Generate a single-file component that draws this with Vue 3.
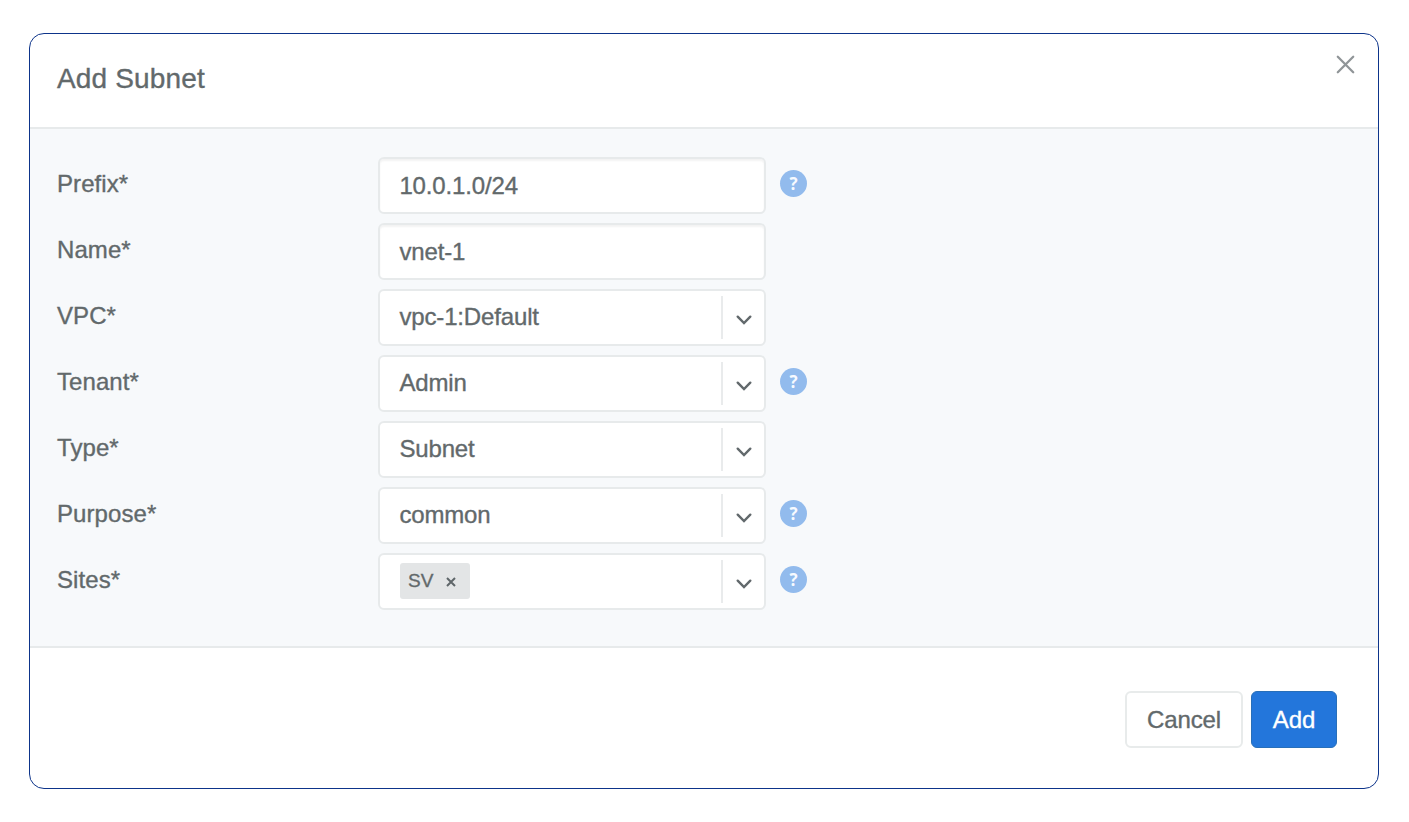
<script setup>
const rows = [
  { label: 'Prefix*', value: '10.0.1.0/24', kind: 'input', help: true },
  { label: 'Name*', value: 'vnet-1', kind: 'input' },
  { label: 'VPC*', value: 'vpc-1:Default', kind: 'select' },
  { label: 'Tenant*', value: 'Admin', kind: 'select', help: true },
  { label: 'Type*', value: 'Subnet', kind: 'select' },
  { label: 'Purpose*', value: 'common', kind: 'select', help: true },
  { label: 'Sites*', value: 'SV', kind: 'tags', help: true },
]
</script>

<template>
  <div class="page">
    <div class="modal">
      <header class="head">
        <h1 class="title">Add Subnet</h1>
        <svg class="close" width="20" height="20" viewBox="0 0 20 20">
          <path d="M1.8 1.8 17.2 17.2M17.2 1.8 1.8 17.2" fill="none" stroke="#909598" stroke-width="2.3" stroke-linecap="round" />
        </svg>
      </header>
      <main class="body">
        <div v-for="row in rows" :key="row.label" class="row">
          <label class="label">{{ row.label }}</label>
          <div class="control" :class="row.kind">
            <span v-if="row.kind === 'tags'" class="tag">
              <span>{{ row.value }}</span>
              <svg width="10" height="10" viewBox="0 0 10 10">
                <path d="M1 1 9 9M9 1 1 9" fill="none" stroke="#5f6669" stroke-width="2" />
              </svg>
            </span>
            <span v-else class="value">{{ row.value }}</span>
            <span v-if="row.kind !== 'input'" class="arrow">
              <svg width="16" height="10" viewBox="0 0 16 10">
                <path d="M1.7 1.7 8 8 14.3 1.7" fill="none" stroke="#62696c" stroke-width="2.4" stroke-linecap="round" />
              </svg>
            </span>
          </div>
          <span v-if="row.help" class="help">?</span>
        </div>
      </main>
      <footer class="foot">
        <button class="btn cancel">Cancel</button>
        <button class="btn add">Add</button>
      </footer>
    </div>
  </div>
</template>

<style>
body {
  margin: 0;
  background: #fff;
}
</style>

<style scoped>
.page {
  box-sizing: border-box;
  width: 1409px;
  height: 822px;
  padding: 33px 30px 33px 29px;
  font-family: "Liberation Sans", Arial, sans-serif;
  font-size: 24px;
  color: #62696b;
  -webkit-text-stroke: 0.35px currentColor;
}
.modal {
  box-sizing: border-box;
  height: 756px;
  display: flex;
  flex-direction: column;
  border: 1px solid #0d348a;
  border-radius: 15px;
  overflow: hidden;
  background: #fff;
}
.head {
  box-sizing: border-box;
  height: 95px;
  display: flex;
  justify-content: space-between;
  align-items: flex-start;
  padding: 21px 22px 0 27px;
  border-bottom: 2px solid #e7eaeb;
}
.title {
  margin: 7px 0 0;
  font-size: 28px;
  line-height: 34px;
  font-weight: 400;
  letter-spacing: 0.15px;
}
.close {
  display: block;
}
.body {
  box-sizing: border-box;
  height: 519px;
  padding: 28px 0 0 27px;
  background: #f7f9fb;
  border-bottom: 2px solid #e7eaeb;
}
.row {
  display: flex;
  align-items: flex-start;
  height: 66px;
}
.label {
  width: 321px;
  padding-top: 13px;
  line-height: 28px;
  letter-spacing: 0.08px;
}
.control {
  box-sizing: border-box;
  width: 388px;
  height: 57px;
  display: flex;
  align-items: center;
  padding-left: 19.4px;
  border: 2px solid #e7eaeb;
  border-radius: 6px;
  background: #fff;
}
.input {
  box-shadow: inset 0 2px 2px rgba(0, 0, 0, 0.05);
}
.value {
  line-height: 28px;
  letter-spacing: -0.15px;
}
.input .value {
  padding-top: 1px;
}
.select .value {
  padding-bottom: 1px;
}
.arrow {
  box-sizing: border-box;
  width: 43px;
  height: 43px;
  margin-left: auto;
  display: flex;
  justify-content: center;
  align-items: center;
  padding-top: 5px;
  padding-left: 1px;
  border-left: 2px solid #e9ebec;
}
.tag {
  box-sizing: border-box;
  width: 70px;
  height: 36px;
  display: flex;
  align-items: center;
  justify-content: space-between;
  margin-left: 0.6px;
  margin-bottom: 1px;
  padding: 0 14px 0 8px;
  border-radius: 3px;
  background: #e3e5e6;
  font-size: 19px;
}
.tag svg {
  margin-top: 2px;
}
.help {
  width: 27px;
  height: 27px;
  margin: 13px 0 0 14px;
  border-radius: 50%;
  background: #92bbed;
  color: #f7faff;
  font: 700 17px/27px "Open Sans", sans-serif;
  text-align: center;
  -webkit-text-stroke: 0;
}
.foot {
  display: flex;
  justify-content: flex-end;
  gap: 8px;
  padding: 43px 41px 0 0;
}
.btn {
  box-sizing: border-box;
  height: 57px;
  padding: 0;
  border-radius: 6px;
  font: inherit;
}
.cancel {
  width: 118px;
  border: 2px solid #e8ebeb;
  background: #fff;
  color: #62696b;
  letter-spacing: -0.1px;
}
.add {
  width: 86px;
  border: 1px solid #286fb9;
  background: #2376db;
  color: #fff;
}
</style>
